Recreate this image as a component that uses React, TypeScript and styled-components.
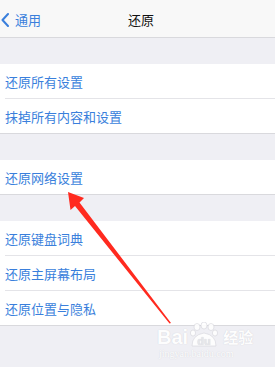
import styled, { createGlobalStyle } from "styled-components";

const Global = createGlobalStyle`
  html, body { margin: 0; padding: 0; }
  body {
    background: #efeff4;
    font-family: "Noto Sans CJK SC", "Liberation Sans", sans-serif;
  }
`;

const Page = styled.div`
  position: relative;
  width: 275px;
  height: 367px;
  overflow: hidden;
  background: #efeff4;
`;

const NavBar = styled.div`
  height: 37px;
  background: #f8f8f8;
  border-bottom: 1px solid #d9d9dd;
  display: flex;
  align-items: center;
  position: relative;
`;

const BackButton = styled.div`
  display: flex;
  align-items: center;
  gap: 6px;
  color: #3a7fdc;
  font-size: 13px;
  padding-left: 1px;
  padding-top: 2px;
`;

const Title = styled.div`
  position: absolute;
  left: 0;
  right: 0;
  top: 0;
  bottom: 0;
  display: flex;
  align-items: center;
  justify-content: center;
  padding-top: 2px;
  padding-left: 7px;
  font-size: 13px;
  color: #111;
  pointer-events: none;
`;

const Group = styled.div`
  margin-top: 26px;
  background: #fff;
  border-bottom: 1px solid #d9d9dd;
`;

const Row = styled.div<{ $first?: boolean }>`
  height: 34px;
  display: flex;
  align-items: center;
  margin-left: 5px;
  font-size: 13px;
  color: #3a7fdc;
  border-top: ${(p) => (p.$first ? "none" : "1px solid #e4e4e8")};
`;

const Watermark = styled.div`
  position: absolute;
  left: 157px;
  top: 322px;
  display: flex;
  flex-direction: column;
  color: #fff;
  text-shadow: 0 0 1px #c9c9cf;
  opacity: 0.9;
`;

const MarkTop = styled.div`
  display: flex;
  align-items: flex-end;
  font-family: "Liberation Sans", sans-serif;
  font-weight: bold;
  font-size: 20px;
  line-height: 22px;
`;

const MarkCn = styled.span`
  font-family: "Noto Sans CJK SC", sans-serif;
  font-size: 15px;
  line-height: 22px;
  margin-left: 3px;
`;

const MarkUrl = styled.div`
  font-family: "Liberation Serif", serif;
  font-size: 10px;
  line-height: 12px;
  margin-left: 2px;
`;

const Overlay = styled.svg`
  position: absolute;
  left: 0;
  top: 0;
  pointer-events: none;
`;

const groups = [
  ["还原所有设置", "抹掉所有内容和设置"],
  ["还原网络设置"],
  ["还原键盘词典", "还原主屏幕布局", "还原位置与隐私"],
];

export default function App() {
  return (
    <Page>
      <Global />
      <NavBar>
        <BackButton>
          <svg width="8" height="14" viewBox="0 0 8 14">
            <path d="M7 1 L1.5 7 L7 13" fill="none" stroke="#3a7fdc" strokeWidth="2" strokeLinecap="round" strokeLinejoin="round" />
          </svg>
          <span>通用</span>
        </BackButton>
        <Title>还原</Title>
      </NavBar>
      {groups.map((g, i) => (
        <Group key={i}>
          {g.map((t, j) => (
            <Row key={t} $first={j === 0}>
              {t}
            </Row>
          ))}
        </Group>
      ))}
      <Watermark>
        <MarkTop>
          <span>Bai</span>
          <svg width="30" height="26" viewBox="0 0 30 26" style={{ margin: "0 1px" }}>
            <ellipse cx="8" cy="5" rx="3" ry="3.5" fill="#fff" stroke="#d0d0d6" strokeWidth="0.6" />
            <ellipse cx="15" cy="3.5" rx="3" ry="3.5" fill="#fff" stroke="#d0d0d6" strokeWidth="0.6" />
            <ellipse cx="22" cy="5" rx="3" ry="3.5" fill="#fff" stroke="#d0d0d6" strokeWidth="0.6" />
            <ellipse cx="4" cy="11" rx="2.6" ry="3" fill="#fff" stroke="#d0d0d6" strokeWidth="0.6" />
            <ellipse cx="26" cy="11" rx="2.6" ry="3" fill="#fff" stroke="#d0d0d6" strokeWidth="0.6" />
            <path d="M3 24 Q3 13 15 11 Q27 13 27 24 Z" fill="#fff" stroke="#d0d0d6" strokeWidth="0.6" />
            <text x="15" y="23" textAnchor="middle" fontSize="11" fontWeight="bold" fontFamily="Liberation Sans, sans-serif" fill="#e6e6ea">du</text>
          </svg>
          <MarkCn>经验</MarkCn>
        </MarkTop>
        <MarkUrl>jingyan.baidu.com</MarkUrl>
      </Watermark>
      <Overlay width="275" height="367" viewBox="0 0 275 367">
        <path d="M68 192 L84 198 L79.5 202.5 L171 323 L169.5 323.5 L75 206 L70.5 210 Z" fill="#ff2a1f" />
      </Overlay>
    </Page>
  );
}
